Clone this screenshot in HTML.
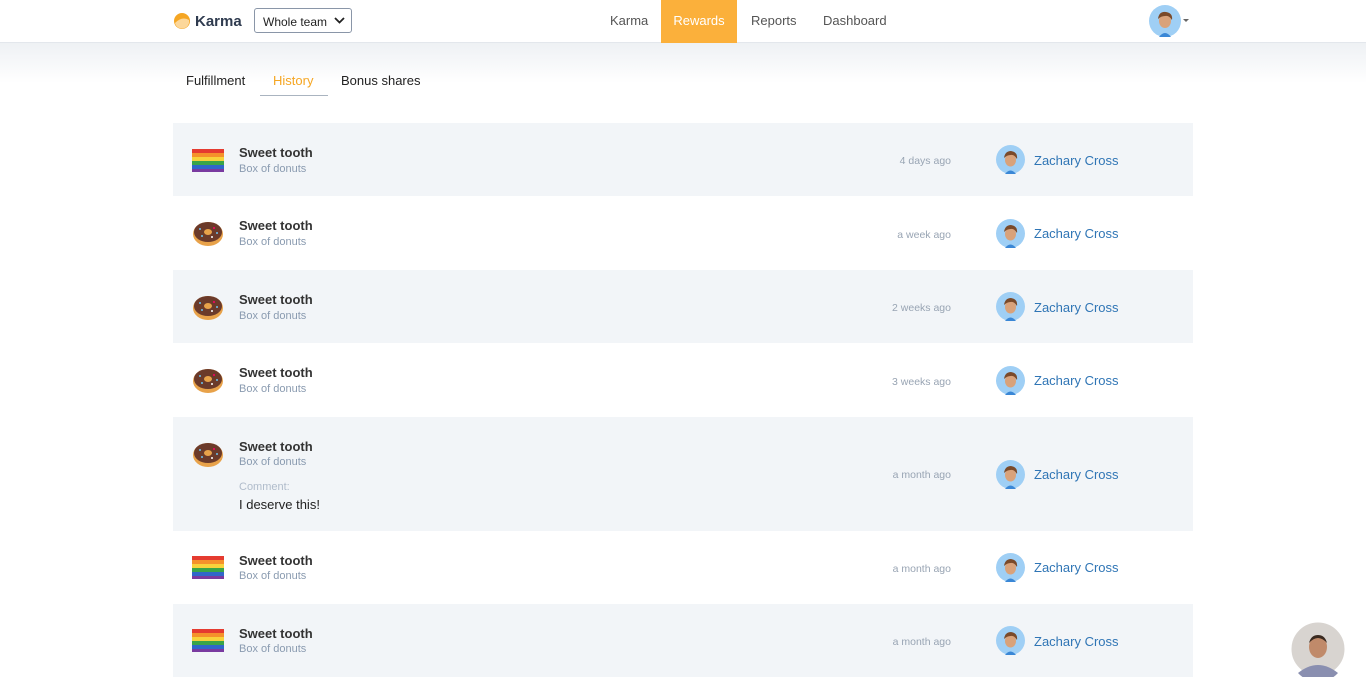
<!DOCTYPE html>
<html><head><meta charset="utf-8"><style>
*{margin:0;padding:0;box-sizing:border-box}
body{width:1366px;height:693px;overflow:hidden;background:#fff;font-family:"Liberation Sans",Helvetica,Arial,sans-serif;color:#333;position:relative}
.hdr{position:absolute;left:0;top:0;width:1366px;height:43px;background:#fff;border-bottom:1px solid #e3e7ec;z-index:2}
.shadow{position:absolute;left:0;top:43px;width:1366px;height:40px;background:linear-gradient(#eef1f4,#fff)}
.logo{position:absolute;left:173px;top:12px;display:flex;align-items:center;font-weight:bold;font-size:15px;color:#2f3b4f}
.sel{position:absolute;left:254px;top:8px;width:98px;height:25px;border:1px solid #8a96a8;border-radius:3px;font-size:12px;color:#222;padding:6px 0 0 8px}
.nav{position:absolute;top:0;height:43px;font-size:13px;color:#555;line-height:41px}
.tabs{position:absolute;top:73px;font-size:13px;color:#222}
.row{position:absolute;left:173px;width:1020px}
.alt{background:#f2f5f8}
.ico{position:absolute;left:19px;width:34px;height:28px}
.t{position:absolute;left:66px;font-size:13px;font-weight:bold;color:#333}
.s{position:absolute;left:66px;font-size:11px;color:#8a9bb0}
.time{position:absolute;right:242px;font-size:10.5px;color:#98a4b3}
.av{position:absolute;left:823px;width:29px;height:29px}
.nm{position:absolute;left:861px;font-size:13px;color:#2f75b5}
</style></head><body>
<div class="shadow"></div>
<div class="hdr">
<div class="logo"><svg width="18" height="18" viewBox="0 0 18 18"><circle cx="9" cy="9" r="8" fill="#f5a623"/><path d="M2 11 Q9 4 16 8 A7 7 0 0 1 2 11Z" fill="#fcd79a"/></svg><span style="margin-left:4px">Karma</span></div>
<div class="sel">Whole team <svg style="position:absolute;right:6px;top:8px" width="11" height="7" viewBox="0 0 11 7"><path d="M1 1 L5.5 5.5 L10 1" fill="none" stroke="#222" stroke-width="1.8"/></svg></div>
<div class="nav" style="left:610px">Karma</div>
<div class="nav" style="left:661px;width:76px;background:#fbb03b;color:#fff;text-align:center">Rewards</div>
<div class="nav" style="left:751px">Reports</div>
<div class="nav" style="left:823px">Dashboard</div>
<svg style="position:absolute;left:1149px;top:5px" width="32" height="32" viewBox="0 0 32 32"><circle cx="16" cy="16" r="16" fill="#9fcff5"/><path d="M10 32 Q16 24 22 32Z" fill="#3a87d6"/><ellipse cx="16" cy="16" rx="6" ry="7" fill="#d9a27a"/><path d="M9 14 Q10 6 17 7 Q24 8 23 15 Q20 10 16 11 Q12 11 9 14Z" fill="#7a4a2a"/></svg>
<div style="position:absolute;left:1183px;top:19px;border:3px solid transparent;border-top:3px solid #666"></div>
</div>
<div class="tabs" style="left:186px">Fulfillment</div>
<div class="tabs" style="left:273px;color:#f5a623">History</div>
<div style="position:absolute;left:260px;top:95px;width:68px;height:1px;background:#aab4c0"></div>
<div class="tabs" style="left:341px">Bonus shares</div>

<svg width="0" height="0" style="position:absolute"><defs>
<g id="flag"><rect x="0" y="4" width="32" height="4" fill="#e53b30"/><rect x="0" y="8" width="32" height="4" fill="#f5922b"/><rect x="0" y="12" width="32" height="4" fill="#f8d33b"/><rect x="0" y="16" width="32" height="4" fill="#3aa548"/><rect x="0" y="20" width="32" height="4" fill="#3067c9"/><rect x="0" y="24" width="32" height="3" fill="#7a3aa0"/></g>
<g id="donut"><ellipse cx="16" cy="15" rx="15" ry="12" fill="#e8a24a"/><ellipse cx="16" cy="13" rx="14" ry="10" fill="#6b3a2a"/><ellipse cx="16" cy="13" rx="4" ry="3" fill="#e8a24a"/><circle cx="8" cy="10" r="1" fill="#6cc4f0"/><circle cx="22" cy="9" r="1" fill="#f06"/><circle cx="25" cy="14" r="1" fill="#6cc4f0"/><circle cx="10" cy="17" r="1" fill="#6cc4f0"/><circle cx="20" cy="18" r="1" fill="#fff"/></g>
<g id="av"><circle cx="14.5" cy="14.5" r="14.5" fill="#9fcff5"/><path d="M9 29 Q14.5 22 20 29Z" fill="#3a87d6"/><ellipse cx="14.5" cy="15" rx="5.5" ry="6.5" fill="#d9a27a"/><path d="M8 13 Q9 6 15 6 Q22 7 21 14 Q18 9 14.5 10 Q11 10 8 13Z" fill="#7a4a2a"/></g>
</defs></svg>

<div class="row alt" style="top:123px;height:73px"><svg class="ico" style="top:22px" viewBox="0 0 34 28"><use href="#flag"/></svg><div class="t" style="top:22px">Sweet tooth</div><div class="s" style="top:40px">Box of donuts</div><div class="time" style="top:32px">4 days ago</div><svg class="av" style="top:22px" viewBox="0 0 29 29"><use href="#av"/></svg><div class="nm" style="top:30px">Zachary Cross</div></div>
<div class="row" style="top:196px;height:74px"><svg class="ico" style="top:23px" viewBox="0 0 34 28"><use href="#donut"/></svg><div class="t" style="top:22px">Sweet tooth</div><div class="s" style="top:40px">Box of donuts</div><div class="time" style="top:33px">a week ago</div><svg class="av" style="top:23px" viewBox="0 0 29 29"><use href="#av"/></svg><div class="nm" style="top:30px">Zachary Cross</div></div>
<div class="row alt" style="top:270px;height:73px"><svg class="ico" style="top:23px" viewBox="0 0 34 28"><use href="#donut"/></svg><div class="t" style="top:22px">Sweet tooth</div><div class="s" style="top:40px">Box of donuts</div><div class="time" style="top:32px">2 weeks ago</div><svg class="av" style="top:22px" viewBox="0 0 29 29"><use href="#av"/></svg><div class="nm" style="top:30px">Zachary Cross</div></div>
<div class="row" style="top:343px;height:74px"><svg class="ico" style="top:23px" viewBox="0 0 34 28"><use href="#donut"/></svg><div class="t" style="top:22px">Sweet tooth</div><div class="s" style="top:40px">Box of donuts</div><div class="time" style="top:33px">3 weeks ago</div><svg class="av" style="top:23px" viewBox="0 0 29 29"><use href="#av"/></svg><div class="nm" style="top:30px">Zachary Cross</div></div>
<div class="row alt" style="top:417px;height:114px"><svg class="ico" style="top:23px" viewBox="0 0 34 28"><use href="#donut"/></svg><div class="t" style="top:22px">Sweet tooth</div><div class="s" style="top:39px">Box of donuts</div><div class="s" style="top:64px;color:#b0bccb">Comment:</div><div style="position:absolute;left:66px;top:80px;font-size:13px;color:#222">I deserve this!</div><div class="time" style="top:52px">a month ago</div><svg class="av" style="top:43px" viewBox="0 0 29 29"><use href="#av"/></svg><div class="nm" style="top:50px">Zachary Cross</div></div>
<div class="row" style="top:531px;height:73px"><svg class="ico" style="top:21px" viewBox="0 0 34 28"><use href="#flag"/></svg><div class="t" style="top:22px">Sweet tooth</div><div class="s" style="top:39px">Box of donuts</div><div class="time" style="top:32px">a month ago</div><svg class="av" style="top:22px" viewBox="0 0 29 29"><use href="#av"/></svg><div class="nm" style="top:29px">Zachary Cross</div></div>
<div class="row alt" style="top:604px;height:73px"><svg class="ico" style="top:21px" viewBox="0 0 34 28"><use href="#flag"/></svg><div class="t" style="top:22px">Sweet tooth</div><div class="s" style="top:39px">Box of donuts</div><div class="time" style="top:32px">a month ago</div><svg class="av" style="top:22px" viewBox="0 0 29 29"><use href="#av"/></svg><div class="nm" style="top:30px">Zachary Cross</div></div>

<svg style="position:absolute;left:1290px;top:621px" width="56" height="56" viewBox="0 0 56 56"><circle cx="28" cy="28" r="27" fill="#d8d4d0" stroke="#fff" stroke-width="1"/><path d="M8 52 Q28 36 48 52 A27 27 0 0 1 8 52Z" fill="#8a8fb0"/><ellipse cx="28" cy="26" rx="9" ry="11" fill="#c08a6a"/><path d="M19 22 Q28 12 37 22 Q35 14 28 14 Q21 14 19 22Z" fill="#3a2a20"/></svg>
</body></html>
